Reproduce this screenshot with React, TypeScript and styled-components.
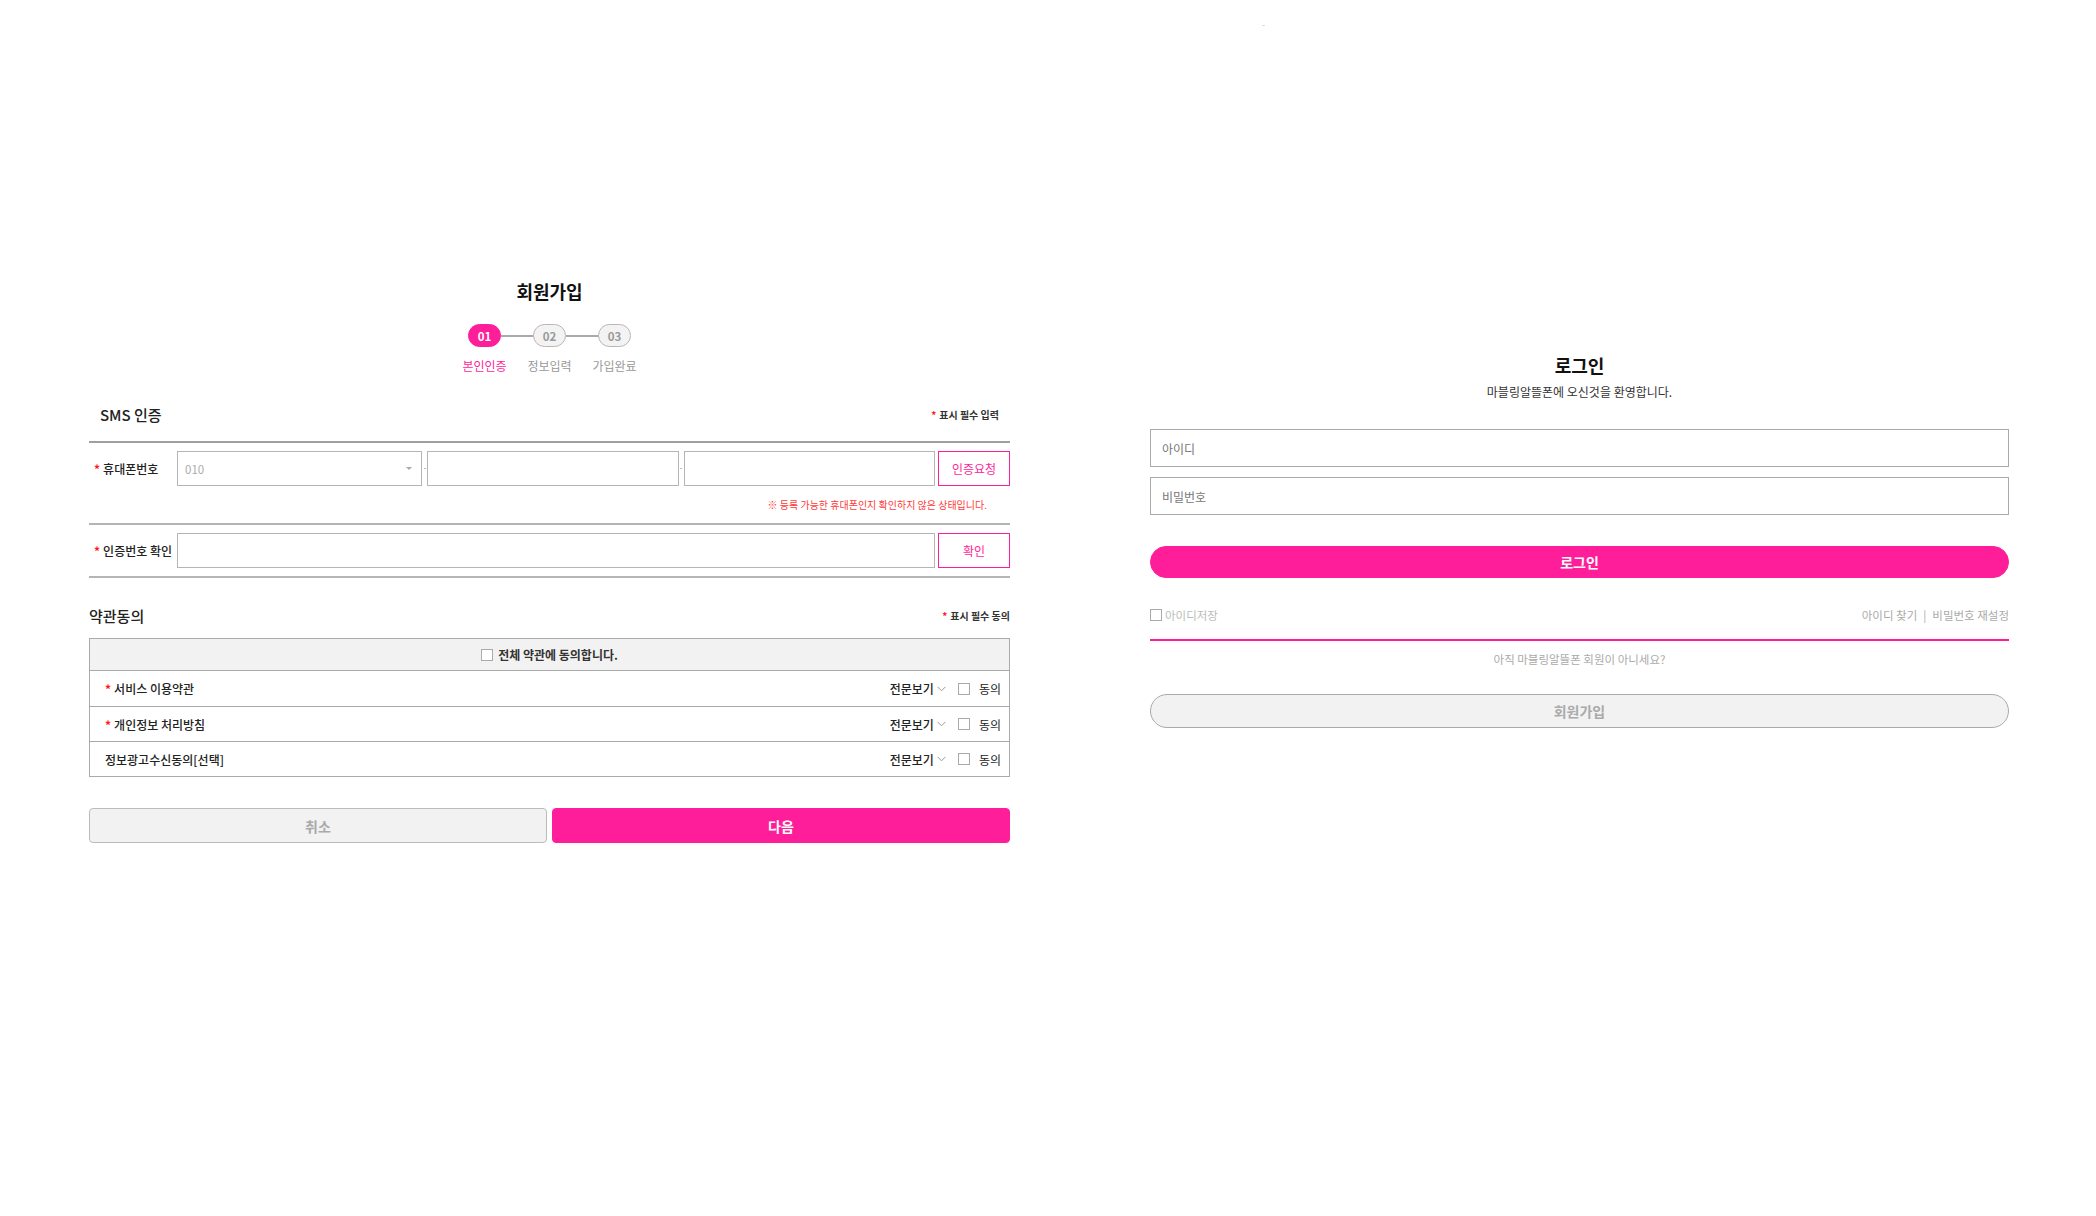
import React from 'react';
import styled, { createGlobalStyle } from 'styled-components';

const PINK = '#ff1e9a';

const Global = createGlobalStyle`
  html, body { margin: 0; padding: 0; background: #fff; }
  body {
    font-family: "Noto Sans CJK KR", "Noto Sans", sans-serif;
    color: #222;
    letter-spacing: 0;
  }
  * { box-sizing: border-box; }
  input { font: inherit; letter-spacing: inherit; }
`;

const Page = styled.div`
  position: relative;
  width: 2096px;
  height: 1216px;
  display: flex;
  align-items: flex-start;
  gap: 140px;
  padding: 278px 87px 0 89px;
`;

const Speck = styled.span`
  position: absolute;
  left: 1262px;
  top: 25px;
  width: 3px;
  height: 1px;
  background: #ddd;
`;

const JoinPanel = styled.section`
  width: 921px;
  display: flex;
  flex-direction: column;
`;

const LoginPanel = styled.section`
  width: 859px;
  margin-top: 74px;
  display: flex;
  flex-direction: column;
`;

const Title = styled.h1`
  margin: 0;
  font-size: 18px;
  line-height: 26px;
  font-weight: 700;
  text-align: center;
  color: #111;
`;

const Steps = styled.div`
  display: flex;
  justify-content: center;
  align-items: flex-start;
  margin-top: 20px;
`;

const Step = styled.div`
  width: 32px;
  display: flex;
  flex-direction: column;
  align-items: center;
`;

const StepBadge = styled.div<{ $active?: boolean }>`
  width: 33px;
  height: 23px;
  border-radius: 12px;
  display: flex;
  align-items: center;
  justify-content: center;
  font-size: 11.5px;
  font-weight: 700;
  background: ${(p) => (p.$active ? PINK : '#f3f3f3')};
  color: ${(p) => (p.$active ? '#fff' : '#999')};
  border: 1px solid ${(p) => (p.$active ? PINK : '#bfb3b8')};
`;

const StepLabel = styled.div<{ $active?: boolean }>`
  margin-top: 11px;
  white-space: nowrap;
  font-size: 12px;
  line-height: 16px;
  color: ${(p) => (p.$active ? PINK : '#999')};
`;

const StepLine = styled.div`
  width: 33px;
  height: 2px;
  margin-top: 11px;
  background: #aaa;
`;

const SectionHead = styled.div<{ $pad?: number }>`
  display: flex;
  justify-content: space-between;
  align-items: center;
  padding: 0 ${(p) => p.$pad ?? 0}px;
  height: 20px;
`;

const SectionTitle = styled.h2`
  margin: 0;
  font-size: 15px;
  font-weight: 500;
  color: #222;
`;

const RequiredNote = styled.span`
  font-size: 10px;
  font-weight: 700;
  color: #333;
`;

const Star = styled.span`
  color: #ff1a1a;
  margin-right: 3px;
  font-weight: 700;
`;

const SmsHead = styled(SectionHead)`
  margin-top: 30px;
`;

const FormTable = styled.div`
  margin-top: 17px;
  border-top: 2px solid #a0a0a0;
  border-bottom: 2px solid #b5b5b5;
`;

const FormRow = styled.div<{ $bottom?: number }>`
  display: grid;
  grid-template-columns: 88px 1fr;
  padding: 8px 0 ${(p) => p.$bottom ?? 8}px;
  & + & { border-top: 2px solid #b5b5b5; }
`;

const RowLabel = styled.div`
  height: 35px;
  display: flex;
  align-items: center;
  padding-left: 5px;
  font-size: 12px;
  font-weight: 500;
  color: #222;
  white-space: nowrap;
`;

const Fields = styled.div`
  display: flex;
  flex-direction: column;
`;

const FieldLine = styled.div`
  display: flex;
  align-items: center;
  height: 35px;
`;

const FakeSelect = styled.div`
  flex: 1;
  height: 35px;
  border: 1px solid #b5b5b5;
  display: flex;
  align-items: center;
  justify-content: space-between;
  padding: 0 9px 0 7px;
  font-size: 11.5px;
  color: #aaa;
`;

const Caret = styled.span`
  width: 0;
  height: 0;
  border-left: 3px solid transparent;
  border-right: 3px solid transparent;
  border-top: 3px solid #aaa;
`;

const Dash = styled.span`
  width: 5px;
  display: flex;
  justify-content: center;
  &::before {
    content: '';
    width: 2px;
    height: 1px;
    background: #bbb;
  }
`;

const TextBox = styled.input<{ $h?: number }>`
  flex: 1;
  min-width: 0;
  height: ${(p) => p.$h ?? 35}px;
  border: 1px solid #b5b5b5;
  outline: none;
  padding: 0 11px;
  font-size: 12px;
  color: #333;
  background: #fff;
  &::placeholder { color: #888; }
`;

const OutlineButton = styled.button`
  width: 72px;
  height: 35px;
  margin-left: 3px;
  border: 1px solid ${PINK};
  background: #fff;
  color: ${PINK};
  font: inherit;
  font-size: 12px;
  padding: 0;
  cursor: pointer;
`;

const Warning = styled.p`
  margin: 12px 23px 0 0;
  text-align: right;
  font-size: 10px;
  line-height: 14px;
  color: #ff3a3a;
`;

const TermsHead = styled(SectionHead)`
  margin-top: 27px;
`;

const TermsTable = styled.div`
  margin-top: 13px;
  border: 1px solid #aaa;
`;

const TermsAll = styled.label`
  height: 32px;
  background: #f2f2f2;
  display: flex;
  align-items: center;
  justify-content: center;
  gap: 5px;
  font-size: 12px;
  font-weight: 700;
  color: #333;
  border-bottom: 1px solid #aaa;
`;

const TermsRow = styled.div`
  height: 35px;
  display: flex;
  align-items: center;
  justify-content: space-between;
  padding: 0 8px 0 15px;
  font-size: 12px;
  color: #222;
  & + & { border-top: 1px solid #aaa; }
`;

const TermName = styled.span`
  font-weight: 500;
  display: flex;
  align-items: center;
`;

const TermStar = styled.span`
  color: #ff1a1a;
  font-weight: 700;
  margin-right: 3px;
`;

const TermActions = styled.div`
  display: flex;
  align-items: center;
`;

const ViewAll = styled.span`
  display: flex;
  align-items: center;
  gap: 3px;
  font-weight: 500;
`;

const Box = styled.span<{ $size?: number }>`
  display: inline-block;
  width: ${(p) => p.$size ?? 12}px;
  height: ${(p) => p.$size ?? 12}px;
  border: 1px solid #aaa;
  background: #fff;
  flex: none;
`;

const AgreeBox = styled(Box)`
  margin: 0 9px 0 12px;
`;

const ButtonRow = styled.div`
  display: flex;
  gap: 5px;
  margin-top: 31px;
`;

const FormButton = styled.button<{ $primary?: boolean }>`
  flex: 1;
  height: 35px;
  border-radius: 4px;
  font: inherit;
  font-size: 14px;
  font-weight: 700;
  cursor: pointer;
  background: ${(p) => (p.$primary ? PINK : '#f2f2f2')};
  color: ${(p) => (p.$primary ? '#fff' : '#aaa')};
  border: 1px solid ${(p) => (p.$primary ? PINK : '#bbb')};
`;

const Subtitle = styled.p`
  margin: 5px 0 0;
  text-align: center;
  font-size: 12px;
  line-height: 18px;
  color: #333;
`;

const LoginFields = styled.div`
  display: flex;
  flex-direction: column;
  gap: 10px;
  margin-top: 28px;
`;

const LoginInput = styled(TextBox)`
  flex: none;
  width: 100%;
  border-color: #aaa;
  &::placeholder { color: #777; }
`;

const PillButton = styled.button<{ $primary?: boolean; $h: number }>`
  width: 100%;
  height: ${(p) => p.$h}px;
  border-radius: 999px;
  font: inherit;
  font-size: 14px;
  font-weight: 700;
  cursor: pointer;
  background: ${(p) => (p.$primary ? PINK : '#f2f2f2')};
  color: ${(p) => (p.$primary ? '#fff' : '#aaa')};
  border: 1px solid ${(p) => (p.$primary ? PINK : '#aaa')};
`;

const LoginButton = styled(PillButton)`
  margin-top: 31px;
`;

const JoinButton = styled(PillButton)`
  margin-top: 26px;
`;

const SaveRow = styled.div`
  margin-top: 28px;
  padding-bottom: 15px;
  border-bottom: 2px solid ${PINK};
  display: flex;
  align-items: center;
  justify-content: space-between;
  height: 35px;
  font-size: 11.5px;
  line-height: 18px;
  color: #bbb;
`;

const SaveLabel = styled.label`
  display: flex;
  align-items: center;
  gap: 3px;
`;

const Links = styled.div`
  display: flex;
  align-items: center;
  gap: 6px;
  color: #aaa;
`;

const Notice = styled.p`
  margin: 9px 0 0;
  text-align: center;
  font-size: 11.5px;
  line-height: 18px;
  color: #aaa;
`;

const Chevron = () => (
  <svg width="9" height="6" viewBox="0 0 9 6" fill="none">
    <polyline points="0.5,0.8 4.5,4.8 8.5,0.8" stroke="#999" strokeWidth="1" />
  </svg>
);

const terms = [
  { name: '서비스 이용약관', required: true },
  { name: '개인정보 처리방침', required: true },
  { name: '정보광고수신동의[선택]', required: false },
];

export default function App() {
  return (
    <>
      <Global />
      <Page>
        <Speck />
        <JoinPanel>
          <Title>회원가입</Title>
          <Steps>
            <Step>
              <StepBadge $active>01</StepBadge>
              <StepLabel $active>본인인증</StepLabel>
            </Step>
            <StepLine />
            <Step>
              <StepBadge>02</StepBadge>
              <StepLabel>정보입력</StepLabel>
            </Step>
            <StepLine />
            <Step>
              <StepBadge>03</StepBadge>
              <StepLabel>가입완료</StepLabel>
            </Step>
          </Steps>

          <SmsHead $pad={11}>
            <SectionTitle>SMS 인증</SectionTitle>
            <RequiredNote>
              <Star>*</Star>표시 필수 입력
            </RequiredNote>
          </SmsHead>

          <FormTable>
            <FormRow $bottom={11}>
              <RowLabel>
                <Star>*</Star>휴대폰번호
              </RowLabel>
              <Fields>
                <FieldLine>
                  <FakeSelect>
                    010
                    <Caret />
                  </FakeSelect>
                  <Dash />
                  <TextBox />
                  <Dash />
                  <TextBox />
                  <OutlineButton>인증요청</OutlineButton>
                </FieldLine>
                <Warning>※ 등록 가능한 휴대폰인지 확인하지 않은 상태입니다.</Warning>
              </Fields>
            </FormRow>
            <FormRow>
              <RowLabel>
                <Star>*</Star>인증번호 확인
              </RowLabel>
              <FieldLine>
                <TextBox />
                <OutlineButton>확인</OutlineButton>
              </FieldLine>
            </FormRow>
          </FormTable>

          <TermsHead>
            <SectionTitle>약관동의</SectionTitle>
            <RequiredNote>
              <Star>*</Star>표시 필수 동의
            </RequiredNote>
          </TermsHead>

          <TermsTable>
            <TermsAll>
              <Box $size={12} />
              전체 약관에 동의합니다.
            </TermsAll>
            {terms.map((t) => (
              <TermsRow key={t.name}>
                <TermName>
                  {t.required && <TermStar>*</TermStar>}
                  {t.name}
                </TermName>
                <TermActions>
                  <ViewAll>
                    전문보기
                    <Chevron />
                  </ViewAll>
                  <AgreeBox />
                  동의
                </TermActions>
              </TermsRow>
            ))}
          </TermsTable>

          <ButtonRow>
            <FormButton>취소</FormButton>
            <FormButton $primary>다음</FormButton>
          </ButtonRow>
        </JoinPanel>

        <LoginPanel>
          <Title>로그인</Title>
          <Subtitle>마블링알뜰폰에 오신것을 환영합니다.</Subtitle>
          <LoginFields>
            <LoginInput $h={38} placeholder="아이디" />
            <LoginInput $h={38} placeholder="비밀번호" type="password" />
          </LoginFields>
          <LoginButton $primary $h={32}>로그인</LoginButton>
          <SaveRow>
            <SaveLabel>
              <Box $size={12} />
              아이디저장
            </SaveLabel>
            <Links>
              <span>아이디 찾기</span>
              <span>|</span>
              <span>비밀번호 재설정</span>
            </Links>
          </SaveRow>
          <Notice>아직 마블링알뜰폰 회원이 아니세요?</Notice>
          <JoinButton $h={34}>회원가입</JoinButton>
        </LoginPanel>
      </Page>
    </>
  );
}
